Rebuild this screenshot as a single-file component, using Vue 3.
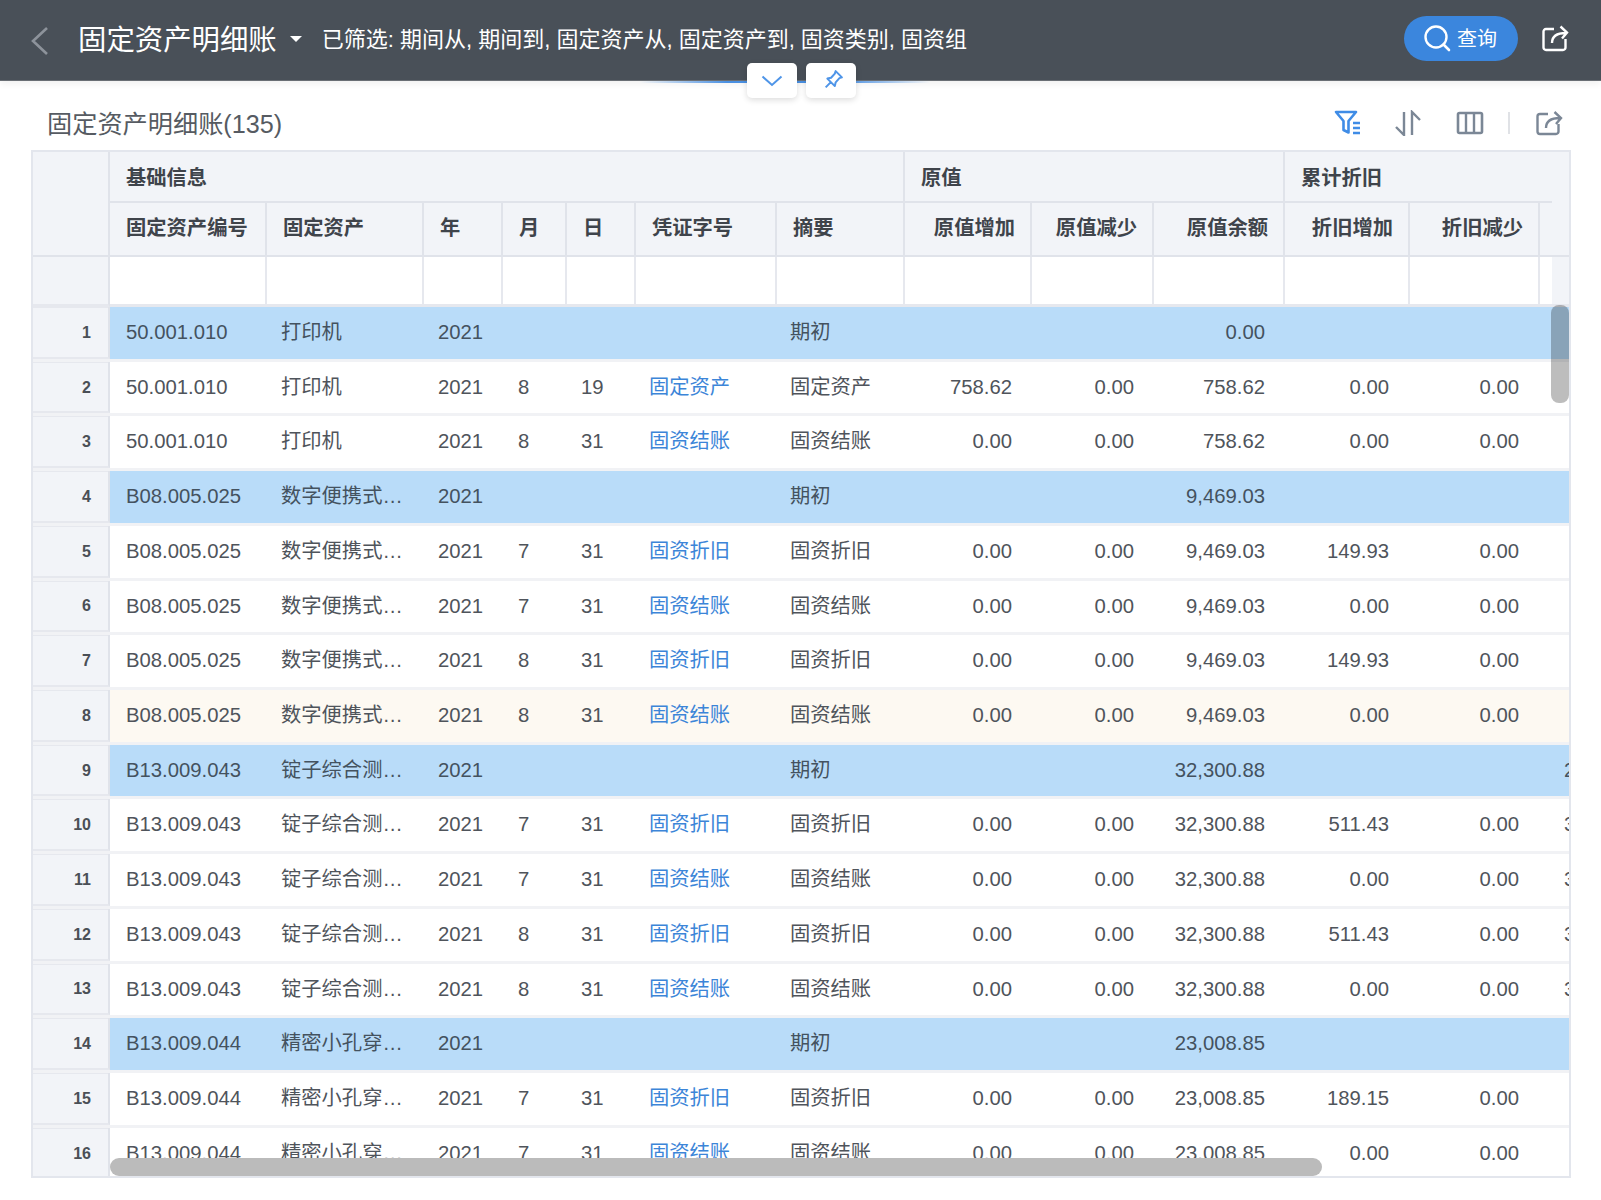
<script setup>
const subCols = [
  { label: '固定资产编号' },
  { label: '固定资产' },
  { label: '年' },
  { label: '月' },
  { label: '日' },
  { label: '凭证字号' },
  { label: '摘要' },
  { label: '原值增加', right: true },
  { label: '原值减少', right: true },
  { label: '原值余额', right: true },
  { label: '折旧增加', right: true },
  { label: '折旧减少', right: true },
];

const open = (code, name, balance, extra = '') => ({ code, name, summary: '期初', balance, type: 'open', extra });
const line = (code, name, month, day, title, add, cut, balance, dep, extra = '') => ({
  code, name, month, day, voucher: title, summary: title, add, cut, balance, dep, depCut: '0.00', extra,
});

const PRINTER = '打印机';
const DMM = '数字便携式万用表';
const TEST = '锭子综合测试仪器';
const EDM = '精密小孔穿孔机床';
const ZJ = '固资折旧';
const JZ = '固资结账';

const rows = [
  open('50.001.010', PRINTER, '0.00'),
  line('50.001.010', PRINTER, 8, 19, '固定资产', '758.62', '0.00', '758.62', '0.00'),
  line('50.001.010', PRINTER, 8, 31, JZ, '0.00', '0.00', '758.62', '0.00'),
  open('B08.005.025', DMM, '9,469.03'),
  line('B08.005.025', DMM, 7, 31, ZJ, '0.00', '0.00', '9,469.03', '149.93'),
  line('B08.005.025', DMM, 7, 31, JZ, '0.00', '0.00', '9,469.03', '0.00'),
  line('B08.005.025', DMM, 8, 31, ZJ, '0.00', '0.00', '9,469.03', '149.93'),
  { ...line('B08.005.025', DMM, 8, 31, JZ, '0.00', '0.00', '9,469.03', '0.00'), type: 'hover' },
  open('B13.009.043', TEST, '32,300.88', '2,045.72'),
  line('B13.009.043', TEST, 7, 31, ZJ, '0.00', '0.00', '32,300.88', '511.43', '3,068.58'),
  line('B13.009.043', TEST, 7, 31, JZ, '0.00', '0.00', '32,300.88', '0.00', '3,068.58'),
  line('B13.009.043', TEST, 8, 31, ZJ, '0.00', '0.00', '32,300.88', '511.43', '3,580.01'),
  line('B13.009.043', TEST, 8, 31, JZ, '0.00', '0.00', '32,300.88', '0.00', '3,580.01'),
  open('B13.009.044', EDM, '23,008.85'),
  line('B13.009.044', EDM, 7, 31, ZJ, '0.00', '0.00', '23,008.85', '189.15'),
  line('B13.009.044', EDM, 7, 31, JZ, '0.00', '0.00', '23,008.85', '0.00'),
];
</script>

<template>
  <div class="page">
    <header class="topbar">
      <svg class="back" width="20" height="30" viewBox="0 0 20 30">
        <path d="M17 2L3 15l14 13" fill="none" stroke="#8d939b" stroke-width="2.6" />
      </svg>
      <h1 class="title">固定资产明细账</h1>
      <span class="caret"></span>
      <span class="filters">已筛选: 期间从, 期间到, 固定资产从, 固定资产到, 固资类别, 固资组</span>
      <button class="query">
        <svg width="28" height="28" viewBox="0 0 28 28">
          <circle cx="13" cy="13" r="10.5" fill="none" stroke="#fff" stroke-width="2.4" />
          <path d="M20.5 20.5L26 26" stroke="#fff" stroke-width="2.6" stroke-linecap="round" />
        </svg>
        <span class="query-text">查询</span>
      </button>
      <svg class="share" width="28" height="28" viewBox="0 0 28 28">
        <path d="M13 5H5a2.5 2.5 0 0 0-2.5 2.5v16A2.5 2.5 0 0 0 5 26h17a2.5 2.5 0 0 0 2.5-2.5V15" fill="none" stroke="#fff" stroke-width="2.4" />
        <path d="M11 19c0-7 5-10 14-10M19.500 2.500L26 8.500l-5 6" fill="none" stroke="#fff" stroke-width="2.4" />
      </svg>
    </header>

    <div class="glow"></div>
    <div class="tabs">
      <button class="tab">
        <svg width="22" height="12" viewBox="0 0 22 12">
          <path d="M1.500 1.500L11 10l9.500-8.500" fill="none" stroke="#4f95e8" stroke-width="2" />
        </svg>
      </button>
      <button class="tab">
        <svg class="pin" width="20" height="20" viewBox="0 0 24 24">
          <path d="M14 2.500l7.500 7.500-3 1-4.500 5-1 4.500L4 11.500l4.500-1 4.500-5zM8.500 15.500L2 22" fill="none" stroke="#4f95e8" stroke-width="2.400" stroke-linejoin="round" />
        </svg>
      </button>
    </div>

    <section class="toolbar">
      <h2 class="list-title">固定资产明细账(135)</h2>
      <div class="tools">
        <svg width="28" height="26" viewBox="0 0 28 26">
          <path d="M2 2h20l-7.500 9v11.500L9.500 20v-9z" fill="none" stroke="#3f8ce6" stroke-width="2.600" stroke-linejoin="round" />
          <path d="M19 13h7M19 18h7M19 23h7" stroke="#3f8ce6" stroke-width="2.400" />
        </svg>
        <svg class="sort" width="28" height="26" viewBox="0 0 28 26">
          <path d="M2 17l8 8V2M18 25V2l8 8" fill="none" stroke="#7b8796" stroke-width="2.400" />
        </svg>
        <svg width="28" height="26" viewBox="0 0 28 26">
          <rect x="2" y="3" width="24" height="20" rx="1.500" fill="none" stroke="#7b8796" stroke-width="2.600" />
          <path d="M10 3v20M18 3v20" stroke="#7b8796" stroke-width="2.400" />
        </svg>
        <span class="divider"></span>
        <svg width="28" height="26" viewBox="0 0 28 26">
          <path d="M13 4H5a2.500 2.500 0 0 0-2.500 2.500v15A2.500 2.500 0 0 0 5 24h16a2.500 2.500 0 0 0 2.500-2.500V14" fill="none" stroke="#7b8796" stroke-width="2.400" />
          <path d="M11 18c0-7 5-10 14-10M19.500 2L26 8l-5 6" fill="none" stroke="#7b8796" stroke-width="2.400" />
        </svg>
      </div>
    </section>

    <div class="table">
      <div class="head">
        <div class="corner"></div>
        <div class="group span-7">基础信息</div>
        <div class="group span-3">原值</div>
        <div class="group span-3">累计折旧</div>
        <div class="gutter-top"></div>
        <div v-for="col in subCols" :key="col.label" class="sub" :class="{ right: col.right }">{{ col.label }}</div>
        <div class="sub"></div>

        <div class="corner-filter"></div>
        <div v-for="col in subCols" :key="'f' + col.label" class="filter-cell"></div>
        <div class="filter-cell last"></div>
        <div class="gutter-filter"></div>
      </div>

      <div v-for="(row, i) in rows" :key="i" class="row" :class="row.type">
        <div class="num">{{ i + 1 }}</div>
        <div class="cell">{{ row.code }}</div>
        <div class="cell clip">{{ row.name }}</div>
        <div class="cell pad-year">2021</div>
        <div class="cell pad-month">{{ row.month }}</div>
        <div class="cell pad-year">{{ row.day }}</div>
        <div class="cell pad-text link">{{ row.voucher }}</div>
        <div class="cell pad-text">{{ row.summary }}</div>
        <div class="cell money">{{ row.add }}</div>
        <div class="cell money">{{ row.cut }}</div>
        <div class="cell money">{{ row.balance }}</div>
        <div class="cell money wide">{{ row.dep }}</div>
        <div class="cell money wide">{{ row.depCut }}</div>
        <div class="cell money wide">{{ row.extra }}</div>
      </div>

      <div class="scroll-y"></div>
      <div class="scroll-x"></div>
    </div>
  </div>
</template>

<style>
html,
body {
  margin: 0;
  background: #fff;
}
</style>

<style scoped>
.page {
  position: relative;
  width: 1601px;
  height: 1200px;
  overflow: hidden;
  background: #fff;
  color: #4f545b;
  font-family: "Liberation Sans", "Noto Sans CJK SC", sans-serif;
}
.topbar {
  display: flex;
  align-items: center;
  height: 81px;
  box-sizing: border-box;
  padding: 0 32px 4px 30px;
  background: #495058;
  border-bottom: 1px solid #6a6f75;
  box-shadow: 0 3px 7px rgba(0, 0, 0, 0.06);
  color: #fff;
}
.back {
  margin-top: 6px;
}
.title {
  margin: 3px 0 0 28px;
  font-size: 28.4px;
  font-weight: 400;
  line-height: 40px;
}
.caret {
  width: 0;
  height: 0;
  margin: 2px 0 0 13px;
  border: 6px solid transparent;
  border-top: 6px solid #fff;
  border-bottom: 0;
}
.filters {
  margin: -2px 0 0 20px;
  font-size: 22px;
  white-space: nowrap;
}
.query {
  display: flex;
  align-items: center;
  gap: 6px;
  width: 114px;
  height: 45px;
  margin-left: auto;
  padding: 0 0 0 19px;
  box-sizing: border-box;
  border: 0;
  border-radius: 23px;
  background: #3b86dd;
  color: #fff;
  font-family: inherit;
  font-size: 20px;
}
.query-text {
  margin-top: -2px;
}
.share {
  margin-left: 23px;
}
.glow {
  position: absolute;
  top: 81px;
  left: 640px;
  width: 290px;
  height: 2px;
  background: linear-gradient(90deg, rgba(74, 144, 226, 0), #4a90e2 30%, #4a90e2 70%, rgba(74, 144, 226, 0));
}
.tabs {
  position: absolute;
  top: 63px;
  left: 747px;
  display: flex;
  gap: 9px;
}
.tab {
  display: flex;
  align-items: center;
  justify-content: center;
  width: 50px;
  height: 35px;
  padding: 0;
  border: 0;
  border-radius: 5px;
  background: #fff;
  box-shadow: 0 2px 6px rgba(0, 0, 0, 0.14);
}
.pin {
  margin: -3px 0 0 6px;
}
.toolbar {
  display: flex;
  align-items: center;
  justify-content: space-between;
  height: 69px;
  box-sizing: border-box;
  padding: 12px 38px 0 47px;
}
.list-title {
  margin: 0;
  font-size: 25.2px;
  font-weight: 400;
  color: #565b62;
}
.tools {
  display: flex;
  align-items: center;
  gap: 32px;
  margin-top: 2px;
}
.sort {
  margin-right: 2px;
}
.divider {
  width: 2px;
  height: 22px;
  margin: 0 -7px 0 -8px;
  background: #e0e2e6;
}
.table {
  position: relative;
  box-sizing: border-box;
  width: 1540px;
  height: 1028px;
  margin-left: 31px;
  overflow: hidden;
  border: 2px solid #e3e6ed;
  font-size: 20.3px;
}
.head {
  display: grid;
  grid-template-columns: 77px 157px 157px 79px 64px 69px 141px 128px 127px 122px 131px 125px 130px 12px 17px;
  grid-template-rows: 51px 54px 50px;
  width: 1536px;
  color: #3f444b;
  font-weight: 700;
  background: #f2f4f8;
}
.corner {
  grid-row: span 2;
  border-right: 2px solid #e0e3ea;
  border-bottom: 2px solid #e0e3ea;
}
.group {
  display: flex;
  align-items: center;
  padding: 0 0 2px 16px;
  border-right: 2px solid #e0e3ea;
  border-bottom: 2px solid #e0e3ea;
}
.span-7 {
  grid-column: span 7;
}
.span-3 {
  grid-column: span 3;
}
.group:nth-child(4) {
  border-right: 0;
}
.sub {
  display: flex;
  align-items: center;
  padding: 0 0 6px 16px;
  overflow: hidden;
  white-space: nowrap;
  border-right: 2px solid #e0e3ea;
  border-bottom: 2px solid #e0e3ea;
}
.sub.right {
  justify-content: flex-end;
  padding: 0 15px 6px 0;
}
.sub:nth-child(18) {
  border-right: 0;
  padding: 0;
  grid-column: span 2;
}
.corner-filter {
  border-right: 2px solid #e0e3ea;
  border-bottom: 3px solid #e6e8ee;
}
.filter-cell {
  background: #fff;
  border-right: 2px solid #e6e8ee;
  border-bottom: 3px solid #e6e8ee;
}
.filter-cell.last {
  border-right: 0;
}
.gutter-filter {
  border-bottom: 3px solid #e6e8ee;
}
.row {
  display: grid;
  grid-template-columns: 77px 157px 157px 79px 64px 69px 141px 128px 127px 122px 131px 125px 130px 124px;
  box-sizing: border-box;
  width: 1536px;
  height: 54.73px;
  border-bottom: 3.73px solid #f1f2f5;
}
.row.open .cell {
  background: #b9dcf9;
  color: #44525f;
}
.row.hover .cell {
  background: #fdf9f2;
}
.num {
  display: flex;
  align-items: center;
  justify-content: flex-end;
  box-sizing: border-box;
  padding: 2px 17px 0 0;
  background: #f2f4f8;
  border-right: 2px solid #e0e3ea;
  border-bottom: 2px solid #e6e8ee;
  box-shadow: inset 0 1px 0 #e6e8ee;
  color: #4a4f56;
  font-size: 16px;
  font-weight: 700;
}
.cell {
  display: block;
  min-width: 0;
  padding-left: 16px;
  overflow: hidden;
  line-height: 51px;
  white-space: nowrap;
  background: #fff;
}
.pad-year {
  padding-left: 14px;
}
.pad-month {
  padding-left: 15px;
}
.pad-text {
  padding-left: 13px;
}
.clip {
  padding-left: 14px;
  padding-right: 17px;
  text-overflow: ellipsis;
}
.link {
  color: #3c85d8;
}
.money {
  padding: 0 20px 0 0;
  text-align: right;
}
.money.wide {
  padding-right: 21px;
}
.scroll-y {
  position: absolute;
  top: 153px;
  right: 0;
  width: 18px;
  height: 98px;
  border-radius: 8px;
  background: rgba(0, 0, 0, 0.26);
}
.scroll-x {
  position: absolute;
  bottom: 0;
  left: 77px;
  width: 1212px;
  height: 18px;
  border-radius: 10px;
  background: #bbbbbb;
}
</style>
